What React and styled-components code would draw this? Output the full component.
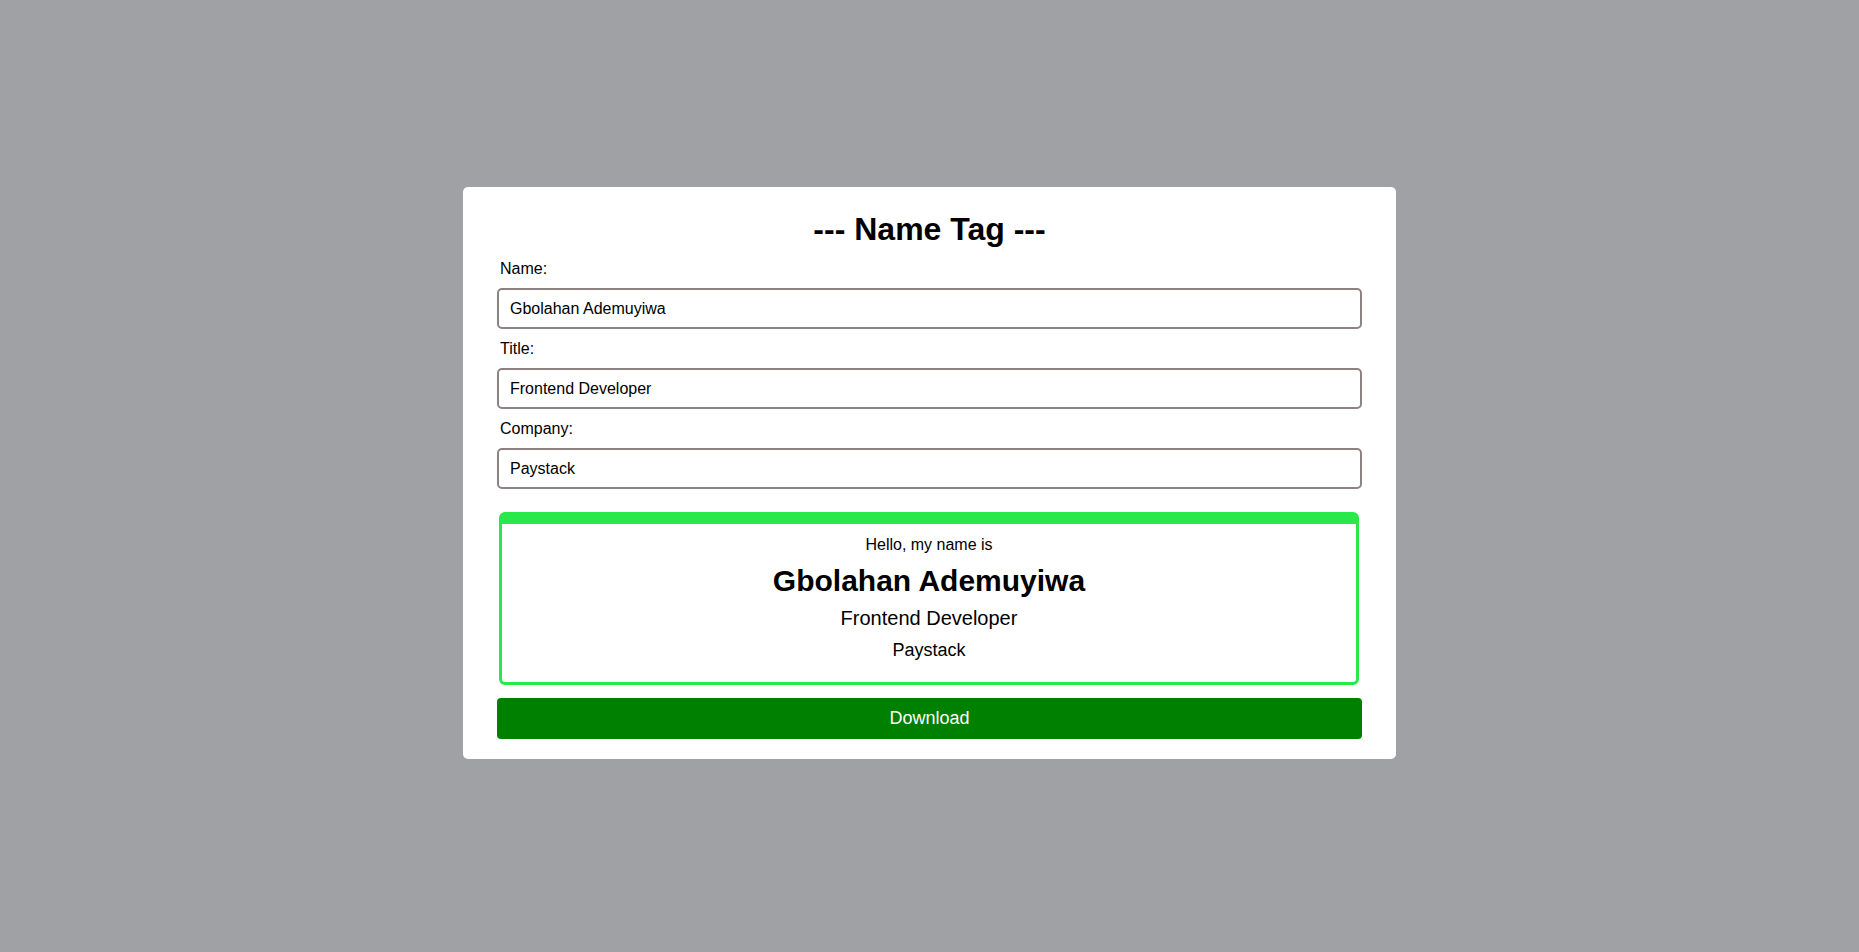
import { useState } from 'react';
import styled, { createGlobalStyle } from 'styled-components';

const GlobalStyle = createGlobalStyle`
    * {
        box-sizing: border-box;
    }
    body {
        margin: 0;
        background: #a0a1a5;
        font-family: 'Liberation Sans', Arial, sans-serif;
        color: #000000;
    }
`;

const StyledPage = styled.div`
    min-height: 100vh;
    padding-bottom: 6px;
    display: flex;
    align-items: center;
    justify-content: center;
`;

const StyledCard = styled.div`
    width: 933px;
    background: #FFFFFF;
    border-radius: 5px;
    padding: 24px 34px 20px;
    display: flex;
    flex-direction: column;
`;

const StyledTitle = styled.h1`
    margin: 0 0 12px;
    font-size: 32px;
    line-height: 37px;
    font-weight: 700;
    text-align: center;
`;

const StyledField = styled.div`
    display: flex;
    flex-direction: column;
    margin-bottom: ${props => props.last ? '0' : '11px'};
`;

const StyledLabel = styled.label`
    font-size: 16px;
    line-height: 18px;
    margin: 0 0 10px 3px;
`;

const StyledInput = styled.input`
    height: 41px;
    width: 100%;
    border: 2px solid #8c8282;
    border-radius: 5px;
    padding: 0 11px;
    font-family: 'Liberation Sans', Arial, sans-serif;
    font-size: 16px;
    color: #000000;
    outline: none;
`;

const StyledBadge = styled.div`
    margin: 23px 3px 13px 2px;
    border: 3px solid #28e84a;
    border-top-width: 12px;
    border-radius: 6px;
    padding: 12px 10px 21px;
    display: flex;
    flex-direction: column;
    align-items: center;
    text-align: center;
`;

const StyledLine = styled.p`
    margin: ${props => props.gap || 0}px 0 0;
    font-size: ${props => props.size}px;
    line-height: ${props => props.lh}px;
    font-weight: ${props => props.bold ? 700 : 400};
`;

const StyledButton = styled.button`
    height: 41px;
    width: 100%;
    border: none;
    border-radius: 4px;
    background: #008000;
    color: #FFFFFF;
    font-family: 'Liberation Sans', Arial, sans-serif;
    font-size: 18px;
    cursor: pointer;
`;

const fields = [
    { key: "name", label: "Name:" },
    { key: "title", label: "Title:" },
    { key: "company", label: "Company:" },
];

const App = () => {
    const [tag, setTag] = useState({
        name: "Gbolahan Ademuyiwa",
        title: "Frontend Developer",
        company: "Paystack",
    });

    return (
        <StyledPage>
            <GlobalStyle />
            <StyledCard>
                <StyledTitle>--- Name Tag ---</StyledTitle>
                {fields.map((f, i) => (
                    <StyledField key={f.key} last={i === fields.length - 1}>
                        <StyledLabel htmlFor={f.key}>{f.label}</StyledLabel>
                        <StyledInput
                            id={f.key}
                            value={tag[f.key]}
                            onChange={e => setTag({ ...tag, [f.key]: e.target.value })}
                        />
                    </StyledField>
                ))}
                <StyledBadge>
                    <StyledLine size={16} lh={18}>Hello, my name is</StyledLine>
                    <StyledLine size={30} lh={34} gap={10} bold>{tag.name}</StyledLine>
                    <StyledLine size={20} lh={23} gap={9}>{tag.title}</StyledLine>
                    <StyledLine size={18} lh={21} gap={10}>{tag.company}</StyledLine>
                </StyledBadge>
                <StyledButton>Download</StyledButton>
            </StyledCard>
        </StyledPage>
    );
}

export default App;
